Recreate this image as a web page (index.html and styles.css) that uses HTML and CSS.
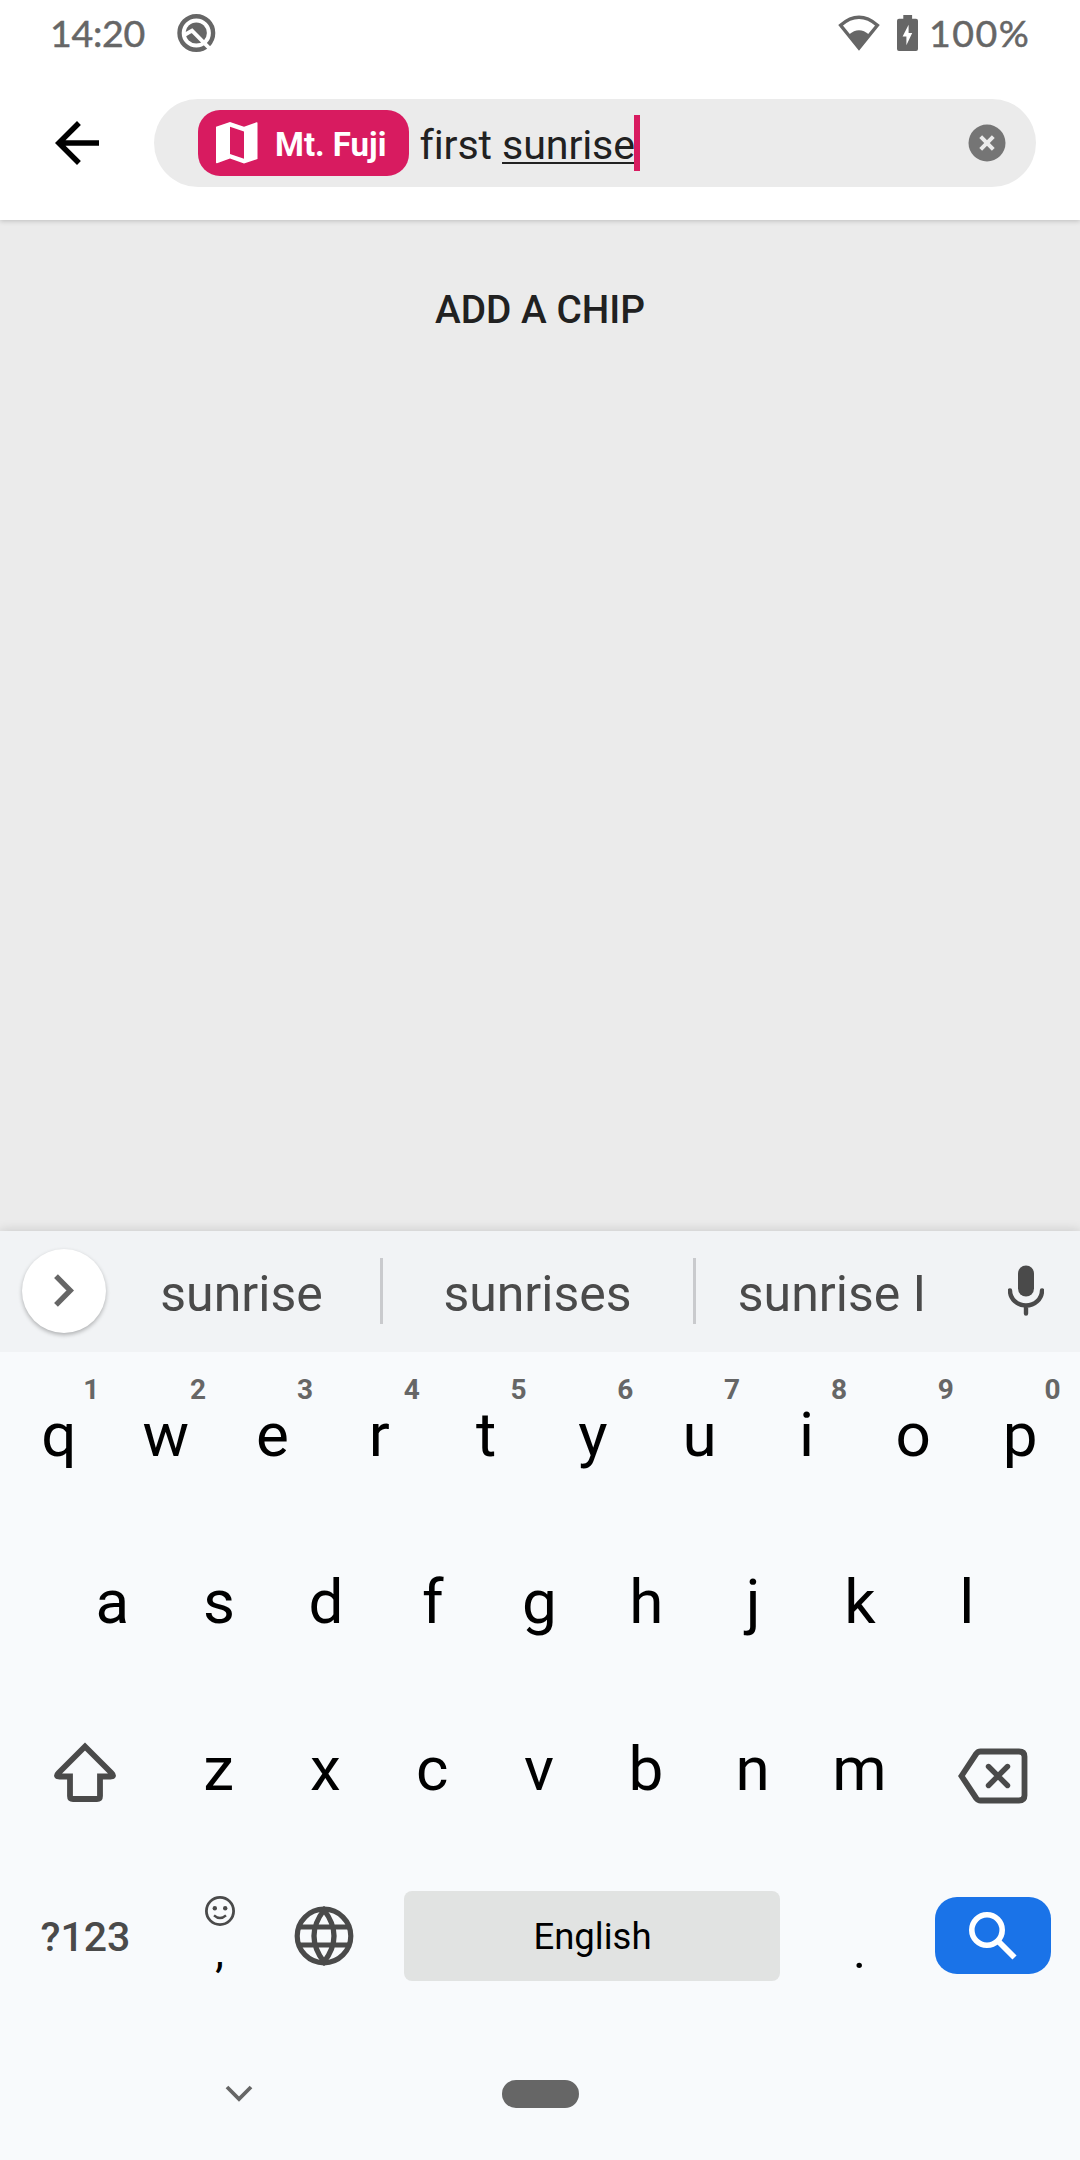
FILE: index.html
```html
<!DOCTYPE html>
<html lang="en">
<head>
<meta charset="utf-8">
<title>Search</title>
<link rel="stylesheet" href="styles.css">
</head>
<body>
<div class="screen">
  <header class="appbar">
    <div class="status">
      <span class="clock">14:20</span>
      <svg class="status-note" width="40" height="40" viewBox="0 0 40 40">
        <circle cx="20.300" cy="20" r="16.800" fill="none" stroke="#666" stroke-width="4.400"/>
        <circle cx="20.300" cy="20" r="10.600" fill="#666"/>
        <path d="M7.500 22.500L16 17.700 33.800 35.600" fill="none" stroke="#fff" stroke-width="3.800"/>
      </svg>
      <span class="spacer"></span>
      <svg class="wifi" width="42" height="36" viewBox="0 0 42 36">
        <path d="M2.600 10.300Q21-5.600 39.400 10.300L21 33z" fill="none" stroke="#666" stroke-width="3.400"/>
        <path d="M11 19.500q10-8.500 20 0L21 34z" fill="#666"/>
      </svg>
      <svg class="battery" width="21" height="36" viewBox="0 0 21 36">
        <path d="M6.300 0h8.800v3.700H19q2 0 2 2v28.200q0 2-2 2H2q-2 0-2-2V5.700q0-2 2-2h4.300z" fill="#666"/>
        <path d="M11.600 9.800L5.600 21.500h3.800v8.700l5.800-12.200h-3.600z" fill="#fff"/>
      </svg>
      <span class="percent">100%</span>
    </div>
    <div class="toolbar">
      <svg class="back" width="66" height="66" viewBox="0 0 24 24"><path d="M20 11H7.830l5.590-5.590L12 4l-8 8 8 8 1.410-1.410L7.830 13H20z"/></svg>
      <div class="search">
        <span class="chip">
          <svg width="42" height="42" viewBox="0 0 42 42"><path fill="#fff" fill-rule="evenodd" d="M0 4.800L14 0l14 4.800L40.500.300Q41.500 0 41.500 1v36L28 41.500l-14-5L1 41.300Q0 41.500 0 40.500zM14 4.800v27.300l14 4.700V9.500z"/></svg>
          <span class="chip-label">Mt. Fuji</span>
        </span>
        <span class="query">first <span class="composing">sunrise</span></span>
        <span class="caret"></span>
        <svg class="clear" width="38" height="38" viewBox="0 0 38 38"><circle cx="19" cy="19" r="18.500" fill="#757575"/><path d="M12.700 12.700l12.600 12.600M25.300 12.700L12.700 25.300" stroke="#ebebeb" stroke-width="4"/></svg>
      </div>
    </div>
  </header>

  <main class="content"><button class="add">ADD A CHIP</button></main>

  <section class="ime">
    <div class="strip">
      <span class="expand"><svg width="20" height="33" viewBox="0 0 20 33"><path d="M2 2.200L16.300 16.500 2 30.800" fill="none" stroke="#666" stroke-width="5.400"/></svg></span>
      <span class="suggestion">sunrise</span>
      <span class="divider"></span>
      <span class="suggestion">sunrises</span>
      <span class="divider"></span>
      <span class="suggestion last">sunrise I</span>
      <svg class="mic" width="36" height="51" viewBox="0 0 36 51"><rect x="10" y="0.500" width="16" height="31" rx="8" fill="#4a4a4a"/><path d="M2 25.500a16 15 0 0 0 32 0M18 41v7.500" fill="none" stroke="#4a4a4a" stroke-width="4.400" stroke-linecap="round"/></svg>
    </div>
    <div class="row">
      <span class="key">q<sup class="hint">1</sup></span><span class="key">w<sup class="hint">2</sup></span><span class="key">e<sup class="hint">3</sup></span><span class="key">r<sup class="hint">4</sup></span><span class="key">t<sup class="hint">5</sup></span><span class="key">y<sup class="hint">6</sup></span><span class="key">u<sup class="hint">7</sup></span><span class="key">i<sup class="hint">8</sup></span><span class="key">o<sup class="hint">9</sup></span><span class="key">p<sup class="hint">0</sup></span>
    </div>
    <div class="row">
      <span class="key">a</span><span class="key">s</span><span class="key">d</span><span class="key">f</span><span class="key">g</span><span class="key">h</span><span class="key">j</span><span class="key">k</span><span class="key">l</span>
    </div>
    <div class="row third">
      <span class="key wide shift">
        <svg width="62" height="60" viewBox="0 0 62 60"><path d="M31 4.500L4.500 31Q1 34.500 5.500 34.500H16V54q0 3 3 3h24q3 0 3-3V34.500H56.500Q61 34.500 57.500 31z" fill="none" stroke="#4a4a4a" stroke-width="5.800"/></svg>
      </span>
      <span class="key">z</span><span class="key">x</span><span class="key">c</span><span class="key">v</span><span class="key">b</span><span class="key">n</span><span class="key">m</span>
      <span class="key wide backspace">
        <svg width="70" height="56" viewBox="0 0 70 56"><path d="M3.500 28L18.200 5.800Q20 3.500 22.500 3.500H61q5.500 0 5.500 5v39q0 5-5.500 5H22.500q-2.500 0-4.300-2.300z" fill="none" stroke="#4a4a4a" stroke-width="5.800"/><path d="M30.500 18.500L49.500 37.500M49.500 18.500L30.500 37.500" stroke="#4a4a4a" stroke-width="5.400" stroke-linecap="round"/></svg>
      </span>
    </div>
    <div class="row bottom">
      <span class="symbols">?123</span>
      <span class="comma">
        <svg width="32" height="32" viewBox="0 0 32 32"><circle cx="16" cy="16" r="13.600" fill="none" stroke="#4a4a4a" stroke-width="2.800"/><circle cx="10.800" cy="13.200" r="2.200" fill="#4a4a4a"/><circle cx="21.200" cy="13.200" r="2.200" fill="#4a4a4a"/><path d="M10 20.300q6 5.400 12 0" fill="none" stroke="#4a4a4a" stroke-width="2.400"/></svg>
        <span>,</span>
      </span>
      <svg class="globe" width="60" height="60" viewBox="0 0 60 60" fill="none" stroke="#4a4a4a" stroke-width="5.200"><circle cx="30" cy="30" r="26.800"/><path d="M5 21h50M5 39h50M30 4Q10 30 30 56Q50 30 30 4z"/></svg>
      <span class="space">English</span>
      <span class="period">.</span>
      <span class="go"><svg width="50" height="50" viewBox="0 0 50 50" fill="none" stroke="#fff"><circle cx="19" cy="19" r="15.200" stroke-width="5.600"/><path d="M31 31L46.500 46.500" stroke-width="5.800"/></svg></span>
    </div>
    <nav class="nav">
      <svg width="28" height="18" viewBox="0 0 28 18"><path d="M2 2l12 12L26 2" fill="none" stroke="#666" stroke-width="3.800"/></svg>
      <span class="pill"></span>
    </nav>
  </section>
</div>
</body>
</html>
```
FILE: styles.css
```css
* { box-sizing: border-box; }
body { margin: 0; font-family: Roboto, "Liberation Sans", sans-serif; }
svg { display: block; flex: none; }
.screen { width: 1080px; height: 2160px; display: flex; flex-direction: column; overflow: hidden; background: #ebebeb; }

.appbar { height: 220px; flex: none; background: #fff; box-shadow: 0 1px 5px rgba(0,0,0,.2); }
.status { height: 66px; display: flex; align-items: center; padding: 0 51px 0 50px; color: #666; font-family: Lato, Roboto, sans-serif; font-size: 37.500px; -webkit-text-stroke: .5px #666; }
.clock { width: 126px; padding-bottom: 1px; letter-spacing: -.3px; white-space: nowrap; }
.spacer { flex: 1; }
.wifi { margin-right: 17px; }
.battery { margin-right: 11px; }
.percent { width: 100px; padding-bottom: 1px; letter-spacing: 1.500px; white-space: nowrap; }
.toolbar { display: flex; align-items: center; height: 154px; padding: 0 44px; }
.back { margin-right: 44px; }
.search { flex: 1; height: 88px; display: flex; align-items: center; padding: 0 30.500px 0 44px; border-radius: 44px; background: #ebebeb; }
.chip { width: 211px; height: 66px; display: flex; align-items: center; gap: 17px; padding-left: 18px; border-radius: 22px; background: #d81b60; color: #fff; }
.chip-label { font-size: 33px; font-weight: 700; padding-top: 3px; white-space: nowrap; }
.query { margin-left: 10.500px; padding-top: 3px; font-size: 41.200px; letter-spacing: -.12px; line-height: 50px; color: #212121; white-space: pre; }
.composing { text-decoration: underline; text-decoration-thickness: 2px; text-underline-offset: 3px; text-decoration-skip-ink: none; }
.caret { width: 6px; height: 56px; margin-left: -.500px; background: #d81b60; }
.clear { margin-left: auto; }

.content { flex: 1; display: flex; justify-content: center; align-items: flex-start; }
.add { margin-top: 57px; padding: 0; border: 0; background: none; color: #212121; font: 500 38.800px/66px Roboto, sans-serif; }

.ime { flex: none; height: 929px; background: #f8fafc; box-shadow: 0 0 11px rgba(0,0,0,.16); }
.strip { height: 121px; display: flex; align-items: center; padding: 0 36px 2px 22px; background: #f1f3f5; color: #4a4a4a; font-size: 50px; }
.expand { width: 84px; height: 84px; flex: none; margin-right: -2px; border-radius: 50%; display: flex; align-items: center; justify-content: center; background: #fff; box-shadow: 0 2px 4px rgba(0,0,0,.28); }
.suggestion { width: 310px; padding: 7px 1px 0 0; text-align: center; white-space: nowrap; }
.expand + .suggestion { width: 276px; }
.suggestion.last { width: 272px; padding-right: 0; }
.divider { width: 3px; height: 66px; flex: none; background: #c9cacd; }
.mic { margin-left: auto; }

.row { height: 167.500px; display: flex; justify-content: center; padding: 0 1px 2px 0; }
.key { position: relative; width: 106.800px; display: flex; align-items: center; justify-content: center; font-size: 62px; line-height: 1; color: #000; }
.hint { position: absolute; top: 24px; right: 13px; width: 16px; text-align: center; font-size: 28px; line-height: 28px; font-weight: 700; color: #666; }
.third { padding: 0 2px 3px 0; }
.wide { width: 160px; }
.shift svg { margin-top: 5px; }
.backspace svg { margin-top: 14px; }

.bottom { justify-content: flex-start; align-items: center; padding-bottom: 5px; }
.symbols { width: 171px; padding-top: 2px; text-align: center; font-size: 41px; font-weight: 500; color: #4a4a4a; }
.comma { width: 97px; display: flex; flex-direction: column; align-items: center; font-size: 44px; line-height: 50px; }
.globe { margin: 0 50px 0 26px; }
.space { width: 376px; height: 90px; border-radius: 8px; display: flex; align-items: center; justify-content: center; background: #e1e3e2; font-size: 36.500px; padding: 2px 0 0 1px; }
.period { width: 155px; padding-left: 4px; text-align: center; font-size: 49px; padding-top: 31px; }
.go { width: 116px; height: 77px; border-radius: 22px; display: flex; align-items: center; justify-content: center; background: #1a73e8; }
.nav { height: 138px; display: flex; align-items: center; padding: 6px 0 0 225px; }
.pill { margin-left: 249px; width: 77px; height: 28px; border-radius: 14px; background: #666; }
```
